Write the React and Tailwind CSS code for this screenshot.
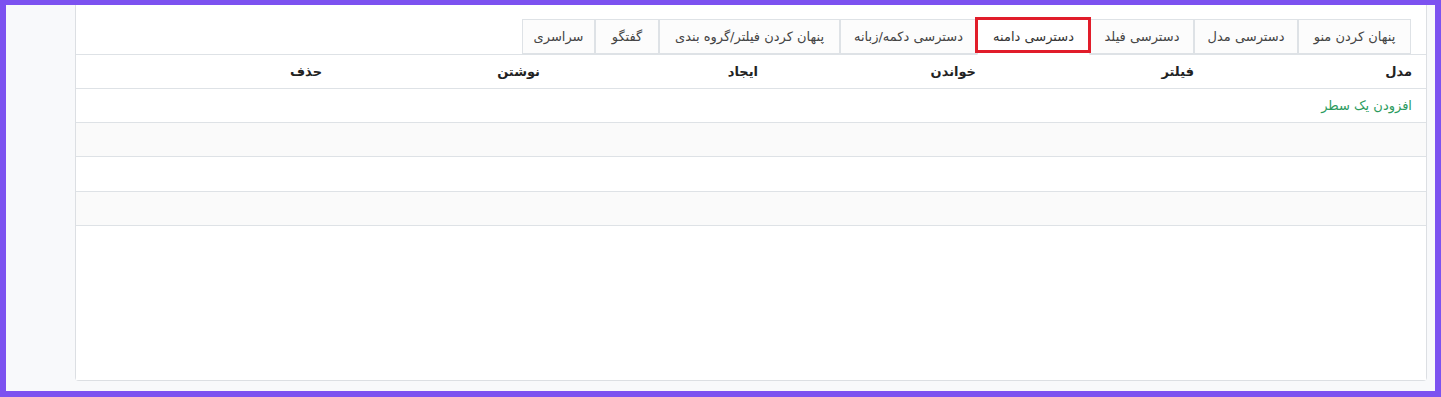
import React from 'react';

const TABS = [
  { label: 'پنهان کردن منو', w: 'w-[113px]' },
  { label: 'دسترسی مدل', w: 'w-[104px]' },
  { label: 'دسترسی فیلد', w: 'w-[104px]' },
  { label: 'دسترسی دامنه', w: 'w-[113px]', active: true },
  { label: 'دسترسی دکمه/زبانه', w: 'w-[137px]' },
  { label: 'پنهان کردن فیلتر/گروه بندی', w: 'w-[181px]' },
  { label: 'گفتگو', w: 'w-[64px]' },
  { label: 'سراسری', w: 'w-[73px]' },
];

const COLUMNS = ['مدل', 'فیلتر', 'خواندن', 'ایجاد', 'نوشتن', 'حذف'];

const Tab = ({ label, w, active }) => {
  if (active) {
    return (
      <div className={`relative ${w} h-[36px] -mb-px flex items-center justify-center bg-white border border-[#dee2e6] border-b-white text-[13px] text-[#333]`}>
        {label}
        {/* highlight box from the screenshot annotation */}
        <div className="absolute -top-[3px] -left-[3px] -right-[2px] bottom-[1px] border-[3px] border-[#e11d2a] pointer-events-none" />
      </div>
    );
  }
  return (
    <div className={`${w} h-[35px] flex items-center justify-center bg-[#fcfcfc] border border-[#dee2e6] text-[13px] text-[#444]`}>
      {label}
    </div>
  );
};

const App = () => {
  return (
    <div
      dir="rtl"
      className="w-[1441px] h-[397px] overflow-hidden border-[6px] border-t-[5px] border-[#7c52f0] bg-[#f8f9fb] pr-[8px] pl-[69px] pb-[10px]"
      style={{ fontFamily: '"DejaVu Sans", "Noto Sans", sans-serif' }}
    >
      <div className="h-full bg-white border-x border-b border-[#dcdfe3] rounded-b-[4px] flex flex-col">
        {/* Tabs */}
        <div className="pt-[14px] pr-[15px] flex items-end border-b border-[#dee2e6]">
          {TABS.map((t) => (
            <Tab key={t.label} {...t} />
          ))}
        </div>

        {/* Table header */}
        <div className="grid grid-cols-[repeat(6,218px)_1fr] h-[34px] items-center border-b border-[#dee2e6] text-[13px] font-bold text-[#222]">
          {COLUMNS.map((c) => (
            <div key={c} className="pr-[14px]">{c}</div>
          ))}
          <div />
        </div>

        {/* Add row */}
        <div className="h-[34px] flex items-center pr-[14px] border-b border-[#dee2e6] text-[13px] text-[#2b9b5e]">
          افزودن یک سطر
        </div>

        <div className="h-[34px] bg-[#fafafa] border-b border-[#dee2e6]" />
        <div className="h-[35px] bg-white border-b border-[#dee2e6]" />
        <div className="h-[34px] bg-[#fafafa] border-b border-[#dee2e6]" />

        <div className="flex-1 bg-white" />
      </div>
    </div>
  );
};

export default App;
